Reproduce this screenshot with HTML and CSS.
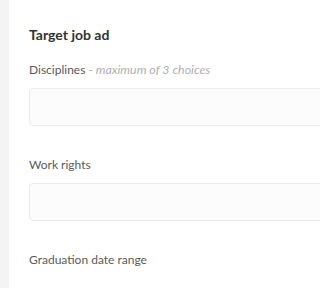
FILE: index.html
```html
<!DOCTYPE html>
<html>
<head>
<meta charset="utf-8">
<link rel="stylesheet" href="styles.css">
</head>
<body>
<div class="layout">
  <aside class="rail"></aside>
  <main class="panel">
    <h2 class="title">Target job ad</h2>
    <div class="field first">
      <div class="label">Disciplines <span class="hint">- maximum of 3 choices</span></div>
      <div class="input"></div>
    </div>
    <div class="field">
      <div class="label">Work rights</div>
      <div class="input"></div>
    </div>
    <div class="field">
      <div class="label">Graduation date range</div>
    </div>
  </main>
</div>
</body>
</html>
```
FILE: styles.css
```css
html, body {
  margin: 0;
  padding: 0;
  background: #ffffff;
  overflow: hidden;
}
body {
  font-family: Lato, "Open Sans", sans-serif;
}
.layout {
  display: flex;
  width: 100%;
  height: 100vh;
  overflow: hidden;
}
.rail {
  width: 9px;
  flex: none;
  background: #f4f4f4;
}
.panel {
  flex: 1;
  padding-left: 20px;
  padding-top: 26px;
  min-width: 0;
}
.title {
  margin: 0;
  font-size: 14px;
  line-height: 17px;
  font-weight: 700;
  color: #333333;
}
.field {
  margin-top: 31.5px;
}
.field.first {
  margin-top: 19px;
}
.label {
  font-size: 12px;
  line-height: 15px;
  color: #5a5a5a;
  margin-bottom: 10.5px;
}
.hint {
  font-style: italic;
  font-size: 12.4px;
  color: #b0b0b0;
}
.input {
  height: 36px;
  margin-right: -40px;
  border: 1px solid #ececec;
  border-radius: 4px;
  background: #fcfcfc;
}
```
